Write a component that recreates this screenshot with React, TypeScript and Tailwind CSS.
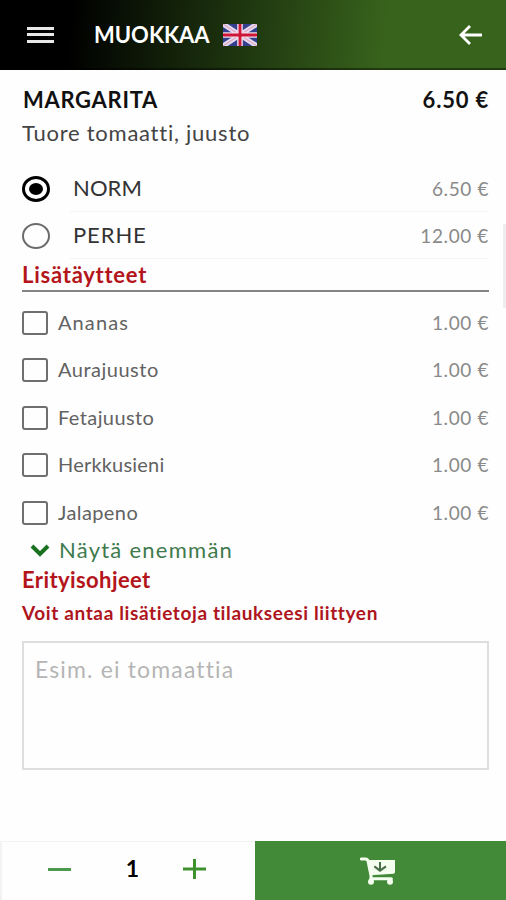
import { useState } from "react";
import clsx from "clsx";

const SIZES = [
  { id: "norm", label: "NORM", price: "6.50 €", spacing: "tracking-[0.1px]" },
  { id: "perhe", label: "PERHE", price: "12.00 €", spacing: "tracking-[0.9px]" },
];

const TOPPINGS = [
  { label: "Ananas", spacing: "tracking-[1.1px]" },
  { label: "Aurajuusto", spacing: "tracking-[0.5px]" },
  { label: "Fetajuusto", spacing: "tracking-[0.4px]" },
  { label: "Herkkusieni", spacing: "tracking-[0.2px]" },
  { label: "Jalapeno", spacing: "tracking-[0.4px]" },
];

function FlagIcon() {
  return (
    <svg width="34" height="22" viewBox="0 0 34 22" className="ml-[14px] mt-px">
      <rect width="34" height="22" fill="#34408f" />
      <path d="M0 0L34 22M34 0L0 22" stroke="#e6dcef" strokeWidth="5" />
      <path d="M0 0L34 22M34 0L0 22" stroke="#dfa5c0" strokeWidth="1.2" />
      <path d="M17 0V22M0 11H34" stroke="#f1dce6" strokeWidth="5.6" />
      <path d="M17 0V22M0 11H34" stroke="#cf1638" strokeWidth="2.8" />
    </svg>
  );
}

function CartIcon() {
  return (
    <svg width="36" height="28" viewBox="0 0 108 84" fill="none">
      <path
        d="M4 6H17Q22 6 24 12L33 56V72"
        stroke="#f4fff0"
        strokeWidth="9"
        strokeLinecap="round"
      />
      <path d="M24 9H105V45Q105 49 101 50L32 55Z" fill="#f4fff0" />
      <path d="M33 65H94" stroke="#f4fff0" strokeWidth="9" strokeLinecap="round" />
      <circle cx="33" cy="74" r="9" fill="#f4fff0" />
      <circle cx="90" cy="74" r="9" fill="#f4fff0" />
      <path d="M60 15V40M43 28L60 41L78 28" stroke="#486c43" strokeWidth="6" />
    </svg>
  );
}

function Header() {
  return (
    <header className="flex h-[70px] shrink-0 items-center border-b-2 border-black/40 bg-linear-[95deg_in_srgb] from-black from-14% to-[#38631c] to-76% pl-[27px] pr-[23px] text-white">
      <button className="mt-px flex w-[27px] flex-col gap-[3.5px]">
        <span className="h-[3px] bg-[#e8e8e8]" />
        <span className="h-[3px] bg-[#e8e8e8]" />
        <span className="h-[3px] bg-[#e8e8e8]" />
      </button>
      <h1 className="ml-[40px] mt-px w-[115px] whitespace-nowrap text-[22px] font-bold leading-7">
        MUOKKAA
      </h1>
      <FlagIcon />
      <button className="ml-auto mt-px">
        <svg width="25" height="22" viewBox="0 0 25 22" fill="none">
          <path d="M12 2L3 11L12 20M3 11H24" stroke="#fff" strokeWidth="2.8" />
        </svg>
      </button>
    </header>
  );
}

function SizeOptions() {
  const [selected, setSelected] = useState("norm");
  return (
    <div>
      {SIZES.map((s) => (
        <div key={s.id} className="flex h-[47px] items-center">
          <button
            onClick={() => setSelected(s.id)}
            className={clsx(
              "flex h-[26px] w-[28px] items-center justify-center rounded-[50%]",
              selected === s.id
                ? "border-[3px] border-black"
                : "border-2 border-[#6b6b6b]",
            )}
          >
            {selected === s.id && (
              <span className="h-3 w-[14px] rounded-[50%] bg-black" />
            )}
          </button>
          <div className="ml-[20px] flex h-full flex-1 items-center justify-between border-b border-[#f4f4f4] pl-[3px]">
            <span className={clsx("-mt-px text-[22px] text-[#333]", s.spacing)}>
              {s.label}
            </span>
            <span className="mt-[3px] text-[19px] tracking-[0.6px] text-[#8a8a8a]">
              {s.price}
            </span>
          </div>
        </div>
      ))}
    </div>
  );
}

function Toppings() {
  const [checked, setChecked] = useState<string[]>([]);
  const toggle = (label: string) =>
    setChecked((c) =>
      c.includes(label) ? c.filter((x) => x !== label) : [...c, label],
    );
  return (
    <div className="pt-[7px]">
      {TOPPINGS.map((t) => (
        <div key={t.label} className="flex h-[47.5px] items-center">
          <button
            onClick={() => toggle(t.label)}
            className={clsx(
              "h-[24px] w-[26px] rounded-[3px] border-2 border-[#6f6f6f]",
              checked.includes(t.label) && "bg-[#438a38]",
            )}
          />
          <span
            className={clsx(
              "-mt-[2px] ml-[10px] text-[20px] text-[#626262]",
              t.spacing,
            )}
          >
            {t.label}
          </span>
          <span className="ml-auto text-[19px] tracking-[0.6px] text-[#8a8a8a]">
            1.00 €
          </span>
        </div>
      ))}
    </div>
  );
}

function Footer() {
  const [count, setCount] = useState(1);
  return (
    <footer className="flex h-[59px] shrink-0">
      <div className="flex w-[255px] items-center border-l-2 border-t border-[#f3f3f3] pb-[4px] pl-[46px]">
        <button
          onClick={() => setCount(Math.max(1, count - 1))}
          className="flex h-6 w-[23px] items-center"
        >
          <span className="h-[3px] w-full bg-[#4b9a50]" />
        </button>
        <span className="-mt-[2px] w-[123px] text-center text-[23px] font-bold text-black">
          {count}
        </span>
        <button onClick={() => setCount(count + 1)} className="-ml-[11px]">
          <svg width="23" height="22" viewBox="0 0 23 22">
            <path d="M0 11H23M11.5 1V21" stroke="#3f9130" strokeWidth="3" />
          </svg>
        </button>
      </div>
      <button className="flex flex-1 items-center justify-center bg-[#438a38] pr-[6px]">
        <CartIcon />
      </button>
    </footer>
  );
}

export default function App() {
  return (
    <div className="flex h-[900px] w-[506px] flex-col overflow-hidden bg-[#fefefe] font-[Lato,sans-serif]">
      <Header />
      <main className="relative flex-1 pl-[22px] pr-[17px] pt-[14px]">
        <div className="flex h-[30px] justify-between pl-px text-[22px] font-bold leading-[31px] text-[#111]">
          <span className="tracking-[0.7px]">MARGARITA</span>
          <span className="tracking-[0.8px]">6.50 €</span>
        </div>
        <p className="mt-[4px] text-[22px] leading-[30px] tracking-[0.75px] text-[#444]">
          Tuore tomaatti, juusto
        </p>
        <div className="mt-[17px]">
          <SizeOptions />
        </div>
        <h2 className="h-[33px] border-b-2 border-[#858585] text-[22px] font-bold leading-[32px] tracking-[0.75px] text-[#b3151b]">
          Lisätäytteet
        </h2>
        <Toppings />
        <button className="flex h-[28px] items-center pl-[8px] text-[#3f7a4d]">
          <svg width="20" height="13" viewBox="0 0 20 13" fill="none">
            <path d="M2 2L10 10L18 2" stroke="#17711f" strokeWidth="4" />
          </svg>
          <span className="-mt-[3px] ml-[9px] text-[22px] tracking-[1.25px]">
            Näytä enemmän
          </span>
        </button>
        <h2 className="text-[22px] font-bold leading-[30px] tracking-[0.4px] text-[#b3151b]">
          Erityisohjeet
        </h2>
        <p className="mt-[3px] text-[19px] font-bold leading-[30px] tracking-[0.62px] text-[#ae151d]">
          Voit antaa lisätietoja tilaukseesi liittyen
        </p>
        <textarea
          placeholder="Esim. ei tomaattia"
          className="mt-[13px] block h-[129px] w-[467px] resize-none border-2 border-[#dedede] px-[11px] py-[11px] text-[23px] leading-[30px] tracking-[1.15px] outline-none placeholder:text-[#b5b5b5]"
        />
        <div className="absolute right-0 top-[154px] h-[84px] w-[3px] bg-[#eeeeee]" />
      </main>
      <Footer />
    </div>
  );
}
